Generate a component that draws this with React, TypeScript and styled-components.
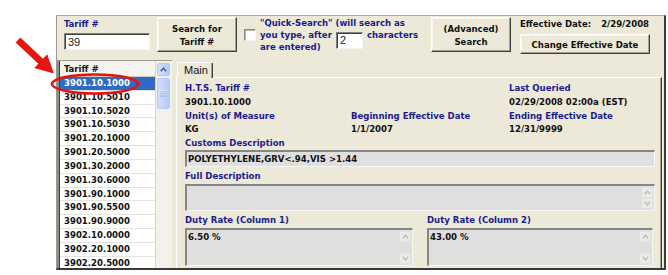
import React from 'react';
import styled, { createGlobalStyle } from 'styled-components';

const Global = createGlobalStyle`
  html, body { margin: 0; padding: 0; background: #ffffff; }
  body { font-family: "Liberation Sans", Arial, sans-serif; }
  * { box-sizing: border-box; }
`;

const Page = styled.div`
  position: relative;
  width: 668px;
  height: 275px;
  padding: 15px 2px 5px 56px;
  overflow: hidden;
`;

const Window = styled.div`
  width: 610px;
  height: 255px;
  overflow: hidden;
  background: #ece9d8;
  border-top: 1px solid #a9a79c;
  border-left: 1px solid #9c9a90;
  border-right: 2px solid #3a3a3a;
  border-bottom: 2px solid #3a3a3a;
  display: flex;
  flex-direction: column;
  font-family: "DejaVu Sans Condensed", "DejaVu Sans", sans-serif;
  font-stretch: condensed;
  font-weight: bold;
  font-size: 9.5px;
  color: #111;
`;

const TopBar = styled.div`
  display: flex;
  align-items: flex-start;
  height: 44px;
  flex: none;
`;

const FieldGroup = styled.div`
  margin-left: 7px;
  padding-top: 1px;
  display: flex;
  flex-direction: column;
`;

const Label = styled.div`
  color: #1b1b8f;
  line-height: 13px;
  white-space: nowrap;
`;

const TextInput = styled.div<{ $w: number; $h: number }>`
  width: ${(p) => p.$w}px;
  height: ${(p) => p.$h}px;
  background: #fff;
  border-style: solid;
  border-width: 1px;
  border-color: #7f7f7f #f4f4f0 #f4f4f0 #7f7f7f;
  box-shadow: inset 1px 1px 0 #404040;
  font-family: "Liberation Sans", Arial, sans-serif;
  font-stretch: normal;
  font-weight: normal;
  font-size: 11px;
  color: #222;
  padding: 2px 0 0 3px;
  line-height: 12px;
`;

const TariffInput = styled(TextInput)`
  margin-top: 3px;
`;

const Button = styled.div<{ $w: number; $h: number; $ml: number; $mt: number }>`
  width: ${(p) => p.$w}px;
  height: ${(p) => p.$h}px;
  margin-left: ${(p) => p.$ml}px;
  margin-top: ${(p) => p.$mt}px;
  background: #ece9d8;
  border: 1px solid;
  border-color: #ffffff #404040 #404040 #ffffff;
  box-shadow: inset -1px -1px 0 #a5a293, inset 1px 1px 0 #f6f5ee;
  display: flex;
  align-items: center;
  justify-content: center;
  text-align: center;
  line-height: 13px;
  color: #111;
  white-space: nowrap;
`;

const CheckBox = styled.div`
  width: 12px;
  height: 12px;
  margin-left: 7px;
  margin-top: 13px;
  background: #fff;
  border: 1px solid;
  border-color: #8a8a8a #f4f4f0 #f4f4f0 #8a8a8a;
  box-shadow: inset 1px 1px 0 #b8b6ab;
  flex: none;
`;

const QuickText = styled.div`
  margin-left: 4px;
  width: 167px;
  padding-top: 1px;
  line-height: 12px;
  color: #1b1b8f;
  white-space: nowrap;
`;

const MiniInput = styled(TextInput)`
  display: inline-block;
  vertical-align: top;
  margin: 3px 4px -8px 4px;
  padding-top: 1px;
`;

const EffectiveBlock = styled.div`
  margin-left: 9px;
  padding-top: 1px;
  display: flex;
  flex-direction: column;
`;

const EffectiveLine = styled.div`
  display: flex;
  gap: 10px;
  line-height: 13px;
  color: #111;
  white-space: nowrap;
`;

const Body = styled.div`
  flex: 1;
  display: flex;
  min-height: 0;
`;

const ListBox = styled.div`
  width: 115px;
  margin-right: 4px;
  display: flex;
  overflow: hidden;
  border-top: 1px solid #9d9d94;
  border-left: 2px solid #8c8c84;
  background: #fff;
`;

const Column = styled.div`
  width: 97px;
  border-left: 1px solid #404040;
  border-right: 1px solid #d6d5cc;
  display: flex;
  flex-direction: column;
  overflow: hidden;
`;

const Header = styled.div`
  height: 16px;
  flex: none;
  background: #f4f3ee;
  border-bottom: 1px solid #cdcabb;
  padding-left: 4px;
  line-height: 15px;
  color: #111;
`;

const Row = styled.div<{ $sel?: boolean }>`
  height: 13.83px;
  flex: none;
  border-bottom: 1px solid #e6e5dd;
  padding-left: 4px;
  line-height: 12.8px;
  background: ${(p) => (p.$sel ? '#316ac5' : '#fff')};
  color: ${(p) => (p.$sel ? '#fff' : '#111')};
`;

const ScrollBar = styled.div`
  width: 16px;
  background: #f3f1ea;
  padding: 2px 2px 0 1px;
  display: flex;
  flex-direction: column;
`;

const XpButton = styled.div<{ $h: number; $mt?: number }>`
  height: ${(p) => p.$h}px;
  margin-top: ${(p) => p.$mt || 0}px;
  border: 1px solid #b7caf5;
  border-radius: 2px;
  background: linear-gradient(90deg, #d2defd, #c1d2fc 60%, #b4c8f6);
  display: flex;
  align-items: center;
  justify-content: center;
`;

const TabArea = styled.div`
  flex: 1;
  margin-right: 2px;
  display: flex;
  flex-direction: column;
`;

const TabStrip = styled.div`
  height: 17px;
  flex: none;
  display: flex;
  align-items: flex-end;
`;

const Tab = styled.div`
  position: relative;
  z-index: 1;
  margin-left: 1px;
  margin-bottom: -1px;
  width: 36px;
  height: 16px;
  background: #ece9d8;
  border-top: 1px solid #ffffff;
  border-left: 1px solid #ffffff;
  border-right: 1px solid #404040;
  box-shadow: inset -1px 0 0 #9e9b8f;
  border-radius: 2px 2px 0 0;
  padding-left: 6px;
  font-family: "Liberation Sans", Arial, sans-serif;
  font-stretch: normal;
  font-weight: normal;
  font-size: 11px;
  line-height: 14px;
  color: #111;
`;

const Panel = styled.div`
  flex: 1;
  border-top: 1px solid #ffffff;
  border-left: 1px solid #ffffff;
  border-right: 1px solid #404040;
  box-shadow: inset -1px 0 0 #9e9b8f;
  padding: 3px 0 0 8px;
  display: flex;
  flex-direction: column;
`;

const InfoGrid = styled.div`
  display: grid;
  grid-template-columns: 166px 158px 1fr;
  line-height: 13.75px;
  white-space: nowrap;
`;

const Value = styled.div`
  color: #111;
  line-height: 13.75px;
  white-space: nowrap;
`;

const FieldLabel = styled.div<{ $mt?: number }>`
  color: #1b1b8f;
  line-height: 13.75px;
  margin-top: ${(p) => p.$mt || 0}px;
  white-space: nowrap;
`;

const Box = styled.div<{ $w: number; $h: number; $mt?: number }>`
  width: ${(p) => p.$w}px;
  height: ${(p) => p.$h}px;
  margin-top: ${(p) => p.$mt || 0}px;
  flex: none;
  background: #dfdfdf;
  border-style: solid;
  border-width: 2px 1px 1px 2px;
  border-color: #868686 #f6f6f2 #f6f6f2 #868686;
  display: flex;
`;

const BoxText = styled.div`
  flex: 1;
  padding-left: 1px;
  line-height: 13px;
  color: #111;
  white-space: nowrap;
`;

const StubScroll = styled.div`
  width: 13px;
  padding: 1px 1px 1px 0;
  display: flex;
  flex-direction: column;
  justify-content: space-between;
`;

const StubBtn = styled.div`
  height: 11px;
  background: #ebebea;
  border: 1px solid #e2e2df;
  border-radius: 2px;
  display: flex;
  align-items: center;
  justify-content: center;
`;

const DutyRow = styled.div`
  display: flex;
  gap: 14px;
  margin-top: 2px;
`;

const DutyCol = styled.div`
  display: flex;
  flex-direction: column;
`;

const Overlay = styled.svg`
  position: absolute;
  left: 0;
  top: 0;
  pointer-events: none;
`;

const Chevron = ({ up, color, w = 7 }: { up: boolean; color: string; w?: number }) => (
  <svg width={w} height={5} viewBox="0 0 7 5">
    <path
      d={up ? 'M0.8 4.2 L3.5 1.2 L6.2 4.2' : 'M0.8 0.8 L3.5 3.8 L6.2 0.8'}
      fill="none"
      stroke={color}
      strokeWidth={1.5}
    />
  </svg>
);

const Stub = () => (
  <StubScroll>
    <StubBtn>
      <Chevron up color="#bdbdbd" />
    </StubBtn>
    <StubBtn>
      <Chevron up={false} color="#bdbdbd" />
    </StubBtn>
  </StubScroll>
);

const codes = [
  '3901.10.1000',
  '3901.10.5010',
  '3901.10.5020',
  '3901.10.5030',
  '3901.20.1000',
  '3901.20.5000',
  '3901.30.2000',
  '3901.30.6000',
  '3901.90.1000',
  '3901.90.5500',
  '3901.90.9000',
  '3902.10.0000',
  '3902.20.1000',
  '3902.20.5000',
];

export default function App() {
  return (
    <Page>
      <Global />
      <Window>
        <TopBar>
          <FieldGroup>
            <Label>Tariff #</Label>
            <TariffInput $w={86} $h={17}>39</TariffInput>
          </FieldGroup>
          <Button $w={80} $h={35} $ml={7} $mt={1}>
            Search for
            <br />
            Tariff #
          </Button>
          <CheckBox />
          <QuickText>
            "Quick-Search" (will search as
            <br />
            you type, after
            <MiniInput $w={27} $h={17}>2</MiniInput>
            characters
            <br />
            are entered)
          </QuickText>
          <Button $w={80} $h={35} $ml={4} $mt={1}>
            (Advanced)
            <br />
            Search
          </Button>
          <EffectiveBlock>
            <EffectiveLine>
              <span>Effective Date:</span>
              <span>2/29/2008</span>
            </EffectiveLine>
            <Button $w={130} $h={20} $ml={0} $mt={4}>
              Change Effective Date
            </Button>
          </EffectiveBlock>
        </TopBar>
        <Body>
          <ListBox>
            <Column>
              <Header>Tariff #</Header>
              {codes.map((c, i) => (
                <Row key={c} $sel={i === 0}>
                  {c}
                </Row>
              ))}
            </Column>
            <ScrollBar>
              <XpButton $h={13}>
                <Chevron up color="#4d6185" />
              </XpButton>
              <XpButton $h={31} $mt={2}>
                <svg width={7} height={7} viewBox="0 0 7 7">
                  {[1, 3, 5].map((y) => (
                    <g key={y}>
                      <line x1={0} x2={7} y1={y} y2={y} stroke="#eef3fe" strokeWidth={1} />
                      <line x1={0} x2={7} y1={y + 1} y2={y + 1} stroke="#8da6dc" strokeWidth={1} />
                    </g>
                  ))}
                </svg>
              </XpButton>
            </ScrollBar>
          </ListBox>
          <TabArea>
            <TabStrip>
              <Tab>Main</Tab>
            </TabStrip>
            <Panel>
              <InfoGrid>
                <FieldLabel>H.T.S. Tariff #</FieldLabel>
                <div />
                <FieldLabel>Last Queried</FieldLabel>
                <Value>3901.10.1000</Value>
                <div />
                <Value>02/29/2008 02:00a (EST)</Value>
                <FieldLabel>Unit(s) of Measure</FieldLabel>
                <FieldLabel>Beginning Effective Date</FieldLabel>
                <FieldLabel>Ending Effective Date</FieldLabel>
                <Value>KG</Value>
                <Value>1/1/2007</Value>
                <Value>12/31/9999</Value>
              </InfoGrid>
              <FieldLabel>Customs Description</FieldLabel>
              <Box $w={470} $h={17}>
                <BoxText>POLYETHYLENE,GRV&lt;.94,VIS &gt;1.44</BoxText>
              </Box>
              <FieldLabel $mt={2}>Full Description</FieldLabel>
              <Box $w={470} $h={27} $mt={1}>
                <BoxText />
                <Stub />
              </Box>
              <DutyRow>
                <DutyCol>
                  <FieldLabel>Duty Rate (Column 1)</FieldLabel>
                  <Box $w={228} $h={38} $mt={2}>
                    <BoxText>6.50 %</BoxText>
                    <Stub />
                  </Box>
                </DutyCol>
                <DutyCol>
                  <FieldLabel>Duty Rate (Column 2)</FieldLabel>
                  <Box $w={226} $h={38} $mt={2}>
                    <BoxText>43.00 %</BoxText>
                    <Stub />
                  </Box>
                </DutyCol>
              </DutyRow>
            </Panel>
          </TabArea>
        </Body>
      </Window>
      <Overlay width={668} height={275}>
        <ellipse cx={95} cy={84} rx={43} ry={9.5} fill="none" stroke="#e3130f" strokeWidth={2.5} />
        <g transform="translate(18 40) rotate(43)">
          <polygon points="0,-3.4 31,-3.4 31,-9.5 49,0 31,9.5 31,3.4 0,3.4" fill="#e8140f" />
        </g>
      </Overlay>
    </Page>
  );
}
